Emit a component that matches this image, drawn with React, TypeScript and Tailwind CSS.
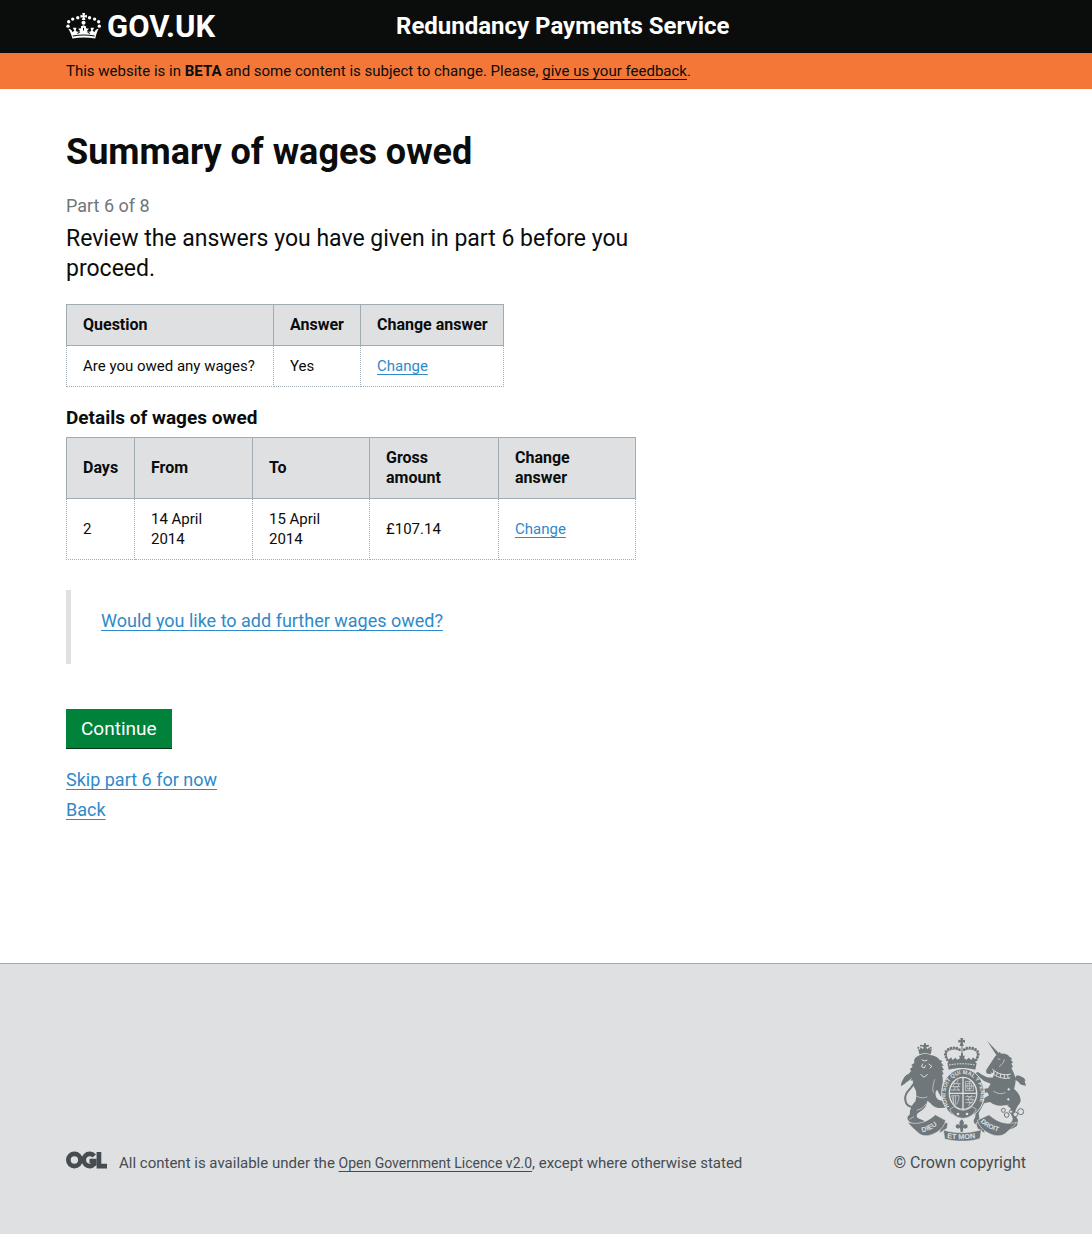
import type { ReactNode } from 'react'

function Crown() {
  return (
    <svg viewBox="30 38 104 80" className="h-[27px] w-[35px] shrink-0" fill="currentColor" aria-hidden="true">
      <path d="M78 38h9l-2 7 7-2v9l-7-2 3 9h-11l3-9-7 2v-9l7 2z" />
      <circle cx="65" cy="52" r="5" />
      <circle cx="100" cy="52" r="5" />
      <circle cx="50" cy="56" r="5" />
      <circle cx="115" cy="56" r="5" />
      <circle cx="38" cy="64" r="5" />
      <circle cx="127" cy="64" r="5" />
      <circle cx="36" cy="77" r="5" />
      <circle cx="129" cy="77" r="5" />
      <circle cx="82" cy="67" r="6" />
      <path d="M37 85c6 0 11 4 12 10l6-5-5-8 11 0-2 8c3 5 8 5 13 1l-6-6 9-2-1-5 8-4 8 4-1 5 9 2-6 6c5 4 10 4 13-1l-2-8h11l-5 8 6 5c1-6 6-10 12-10-5 9-8 19-10 29-23-4-45-4-68 0-2-10-7-20-12-29z" />
      <path d="M50 106c22-4 43-4 65 0M64 99l7-5M101 99l-7-5M82 82v8" fill="none" stroke="#0b0c0c" strokeWidth="3" />
    </svg>
  )
}

function RoyalArms() {
  return (
    <svg viewBox="33 26 375 309" className="h-[103px] w-[125px]" aria-hidden="true">
      <defs>
        <path id="garter" d="M178 232a53 60 0 1 1 84 -2" />
        <path id="scroll-left" d="M97 309q30-7 52-29" />
        <path id="scroll-mid" d="M171 326q45 8 94-2" />
        <path id="scroll-right" d="M271 277q22 25 64 31" />
      </defs>
      {/* lion */}
      <g fill="#6f777b">
        <path d="M84 57l5 4 3-7 7 6 2-6-5-3v-4h6v-5h6v5h6v4l-5 3 2 6 7-6 3 7 5-4-4 18c-11-4-23-4-34 0z" />
        <circle cx="85" cy="55" r="3" />
        <circle cx="93" cy="49" r="3" />
        <circle cx="114" cy="49" r="3" />
        <circle cx="122" cy="55" r="3" />
        <path d="M88 78c10-5 26-5 36 0 10 1 19 6 25 14l9 3-5 4 8 10-6 1 7 12-6 1 5 12-5 1c3 9 3 17 2 25l-3 12 12 10c7 1 11 5 13 12l-1 14-9-6-9 4-10-8-10-18-4 6c-2 14 3 21 12 26 11 1 18 5 25 12l4 13-12-3-16 1c-12 0-22-6-30-16l-8-6c-2 12-6 22-15 28l-14 10c-4 6-4 10 0 14l12 5c8 2 12 6 14 13l-9-2-14 3c-14-1-27-5-32-13-4-7-1-13 5-16 0-16 6-28 17-40 4-12 3-22 2-32l-7-13-3-18-6 1 3-9-8 1 5-11-6-2 8-9-5-4 9-8-4-5 9-6c-2-9 1-14 6-18z" />
      </g>
      <g fill="none" stroke="#dee0e2" strokeWidth="3">
        <path d="M95 91l9 4 8-3M98 103l-3 9 8 4 4-8M116 104l10 7-7 6M92 134l9 10 12-9" />
        <path d="M72 196c14 10 29 12 40 6M80 243c15-4 22-9 28-20M134 150c-5 18-8 28-3 40M58 270l14-8" strokeWidth="2" />
      </g>
      <path d="M68 233c-14-1-20-9-22-20-3-17 6-26 17-38 10-12 16-22 12-30-6-10-17-6-22-1" fill="none" stroke="#6f777b" strokeWidth="6" />
      <path d="M68 135c-10-5-22 1-27 12-4 8-8 12-8 24 6-5 12-6 16-12 10-5 18-12 19-24z" fill="#6f777b" />

      {/* unicorn */}
      <g fill="#6f777b">
        <path d="M291 34l30 46 8-6z" />
        <path d="M316 80l10-6 2-7 6 6c11-1 21 3 25 10l7 4-3 5 6 7-5 4 5 9-5 4 6 12c6 13 9 25 5 39l-3 12c13 10 19 20 18 33-2 12-8 19-13 30-3 12 1 20 7 30l-3 17c-9 8-22 13-39 13-5-9 0-15 12-18 13-5 16-12 13-21-6-10-7-18-5-26l-13-10c-19 4-34 3-49-9l-18 4-16 30 3 24-13 9c-7-7-6-14-1-20l4-24 14-29 24-14-5-9-22 5-17-8-10 4c-6 0-9-5-8-12l12-3 27 4 20-2 8-14-20-8-15-13-12-1-3-8 12-5 12 8 15 8 17 1 7-17c-6 3-10 6-18 6-8-1-11-6-7-14z" />
      </g>
      <g fill="none" stroke="#dee0e2" strokeWidth="3">
        <path d="M307 119c14 14 34 21 55 15M304 130c15 13 35 20 57 16" />
        <path d="M312 123l-2 8M322 129l-2 9M332 133l-1 10M343 136v10M353 136l1 10" />
        <path d="M323 88l8 3M343 90c-1 9-7 15-16 22M310 185c12 8 24 11 37 4M354 226c-4 9-2 17 4 26" strokeWidth="2" />
      </g>
      <path d="M366 236c18-8 27-18 21-32-6-13-19-18-21-34-1-13 7-24 18-25 10-1 17 3 20 10" fill="none" stroke="#6f777b" strokeWidth="6" />
      <path d="M378 140c17-6 26 12 30 29-11-1-19-3-22-11-7-3-12-9-8-18z" fill="#6f777b" />

      {/* garter and quartered shield */}
      <ellipse cx="219" cy="192" rx="64" ry="74" fill="#6f777b" stroke="#dee0e2" strokeWidth="3" />
      <ellipse cx="219" cy="192" rx="41" ry="48" fill="#6f777b" stroke="#dee0e2" strokeWidth="4" />
      <g fill="none" stroke="#dee0e2" strokeWidth="4">
        <path d="M219 144v96M178 192h82" />
        <path d="M186 163h26M183 172h28M182 182h28M190 157l5 6-6 6 7 6-6 8M205 151l-5 9 7 6-6 8 7 10" strokeWidth="2" />
        <path d="M226 156h14q10 0 10 8v20M226 156v28h24M231 162v16h13v-16zM226 170h24M238 156v28" strokeWidth="2" />
        <path d="M185 199h22c0 17-6 26-13 31l-9-31M191 200v22M197 200v25" strokeWidth="2" />
        <path d="M226 202h28M226 211h27M226 220h22M231 198l7 6-5 8 8 6-5 12M246 197l-5 8 8 8-7 10" strokeWidth="2" />
      </g>
      <text fill="#dee0e2" fontSize="17" className="font-['Liberation_Sans'] font-bold">
        <textPath href="#garter">HONI SOIT QUI MAL Y PENSE</textPath>
      </text>
      <path d="M179 240l14-8c16 14 37 14 53 0l13 8c-9 17-23 27-40 27s-31-10-40-27z" fill="#6f777b" stroke="#dee0e2" strokeWidth="2" />
      <g fill="#dee0e2">
        <circle cx="204" cy="254" r="4" />
        <circle cx="231" cy="254" r="4" />
      </g>

      {/* central crown */}
      <g fill="#6f777b">
        <path d="M211 26h9l-2 7 7-2v9l-7-2 3 12h-12l3-12-7 2v-9l7 2zM172 101c28-6 60-6 88 0l-4 20c-27-7-53-7-80 0z" />
        <path d="M175 93l8-9 5 8 8-7 6 6 8-4-3-8h6v-7h6v7h6l-3 8 8 4 6-6 8 7 5-8 8 9-3 9c-26-5-50-5-76 0z" />
      </g>
      <g fill="none" stroke="#6f777b">
        <path d="M178 99c-14-15-16-31-5-38 14-9 31-7 38 3M253 99c14-15 16-31 5-38-14-9-31-7-38 3" strokeWidth="8" strokeDasharray="0 9" strokeLinecap="round" />
        <path d="M179 99c-12-15-13-29-4-35 12-7 26-6 36 0M252 99c12-15 13-29 4-35-12-7-26-6-36 0M216 48v45" strokeWidth="3" />
      </g>
      <path d="M177 107c26-5 52-5 78 0" fill="none" stroke="#dee0e2" strokeWidth="3" strokeDasharray="5 3" />

      {/* fleur-de-lis and motto scroll */}
      <path d="M215 270c9 8 8 14 3 20 6-8 15-7 15 1s-9 8-13 4l-2 13h-6l-2-13c-4 4-13 4-13-4s9-9 15-1c-5-6-6-12 3-20z" fill="#6f777b" />
      <g fill="#6f777b" stroke="#dee0e2" strokeWidth="2">
        <path d="M152 278l22 3-3 16-22 15zM284 276l-26 5 4 16 22 15z" />
        <path d="M53 279c30 8 58 0 83-23l31 17c-4 18-19 36-42 43-20 7-33 3-43-8-10-8-20-17-29-29z" />
        <path d="M380 279c-30 8-58 0-83-23l-35 17c5 18 22 36 44 43 21 7 35 3 45-8 10-8 20-17 29-29z" />
        <path d="M160 302c37 11 75 11 114-1l-4 27c-33 10-72 10-106 1z" />
      </g>
      <g fill="#dee0e2" className="font-['Liberation_Sans'] font-bold">
        <text fontSize="21"><textPath href="#scroll-left">DIEU</textPath></text>
        <text fontSize="22"><textPath href="#scroll-mid">ET MON</textPath></text>
        <text fontSize="20"><textPath href="#scroll-right">DROIT</textPath></text>
      </g>
      <g fill="#dee0e2" stroke="#6f777b" strokeWidth="3">
        <circle cx="355" cy="210" r="5" />
        <circle cx="356" cy="180" r="5" />
        <circle cx="340" cy="243" r="6" />
        <circle cx="350" cy="257" r="7" />
        <circle cx="363" cy="247" r="5" />
        <circle cx="376" cy="255" r="7" />
        <circle cx="392" cy="247" r="9" />
      </g>
    </svg>
  )
}

function OglLogo() {
  return (
    <svg viewBox="30 32 122 52" className="h-[18px] w-[41px] shrink-0" fill="none" stroke="#464c50" strokeWidth="14" role="img" aria-label="Open Government Licence">
      <circle cx="55" cy="58" r="18" />
      <path d="M114 46a18 18 0 1 0 0 24v-9h-14" />
      <path d="M128 34v42h24" />
    </svg>
  )
}

function TextLink({ children, tone = 'text-[#2e8aca]' }: { children: ReactNode; tone?: string }) {
  return (
    <a href="#" className={`underline decoration-1 underline-offset-[3px] [text-decoration-skip-ink:none] ${tone}`}>
      {children}
    </a>
  )
}

function Th({ children, nowrap = false }: { children: ReactNode; nowrap?: boolean }) {
  return (
    <th scope="col" className={`border border-[#a1acb2] bg-[#dee0e2] px-4 py-2.5 text-left text-base leading-5 font-bold ${nowrap ? 'whitespace-nowrap' : ''}`}>
      {children}
    </th>
  )
}

function Td({ children }: { children: ReactNode }) {
  return <td className="border border-dotted border-[#a1acb2] px-4 py-2.5 text-[15px] leading-5">{children}</td>
}

export default function App() {
  return (
    <div className="flex min-h-screen flex-col bg-white font-['Roboto',sans-serif] text-[#0b0c0c]">
      <header className="bg-[#0b0c0c] px-4 text-white">
        <div className="mx-auto flex max-w-[960px] flex-wrap items-center py-2.5">
          <a href="#" className="flex w-[330px] items-center gap-1.5 text-[31px] leading-[33px] font-bold">
            <Crown />
            GOV.UK
          </a>
          <a href="#" className="text-2xl leading-[33px] font-bold">Redundancy Payments Service</a>
        </div>
      </header>
      <div className="bg-[#f47738] px-4">
        <p className="mx-auto max-w-[960px] py-2 text-[15px] leading-5">
          This website is in <strong className="font-bold">BETA</strong> and some content is subject to change. Please,{' '}
          <TextLink tone="text-[#0b0c0c]">give us your feedback</TextLink>.
        </p>
      </div>

      <main className="grow px-4 pt-10 pb-[138px]">
        <div className="mx-auto max-w-[960px]">
          <div className="max-w-[570px]">
            <h1 className="text-4xl leading-[46px] font-bold">Summary of wages owed</h1>
            <p className="mt-[18px] text-[18px] leading-[25px] text-[#6f777b]">Part 6 of 8</p>
            <p className="mt-[6px] text-[23px] leading-[30px]">Review the answers you have given in part 6 before you proceed.</p>
          </div>

          <table className="mt-5 w-[438px] table-fixed border-collapse">
            <colgroup>
              <col className="w-[207px]" />
              <col className="w-[87px]" />
              <col />
            </colgroup>
            <thead>
              <tr>
                <Th>Question</Th>
                <Th>Answer</Th>
                <Th nowrap>Change answer</Th>
              </tr>
            </thead>
            <tbody>
              <tr>
                <Td>Are you owed any wages?</Td>
                <Td>Yes</Td>
                <Td><TextLink>Change</TextLink></Td>
              </tr>
            </tbody>
          </table>

          <h2 className="mt-[18px] mb-[7px] text-[19px] leading-[25px] font-bold">Details of wages owed</h2>
          <table className="w-[570px] table-fixed border-collapse">
            <colgroup>
              <col className="w-[68px]" />
              <col className="w-[118px]" />
              <col className="w-[117px]" />
              <col className="w-[129px]" />
              <col />
            </colgroup>
            <thead>
              <tr>
                <Th>Days</Th>
                <Th>From</Th>
                <Th>To</Th>
                <Th>Gross amount</Th>
                <Th>Change answer</Th>
              </tr>
            </thead>
            <tbody>
              <tr>
                <Td>2</Td>
                <Td>14 April 2014</Td>
                <Td>15 April 2014</Td>
                <Td>£107.14</Td>
                <Td><TextLink>Change</TextLink></Td>
              </tr>
            </tbody>
          </table>

          <div className="mt-[30px] border-l-[5px] border-[#dee0e2] pt-[18px] pb-[31px] pl-[30px] text-[18px] leading-[25px]">
            <TextLink>Would you like to add further wages owed?</TextLink>
          </div>

          <button type="button" className="mt-[45px] block bg-[#00823b] px-[15px] py-[7px] text-[19px] leading-[25px] text-white shadow-[0_1px_0_#003618]">
            Continue
          </button>
          <div className="mt-[17px] flex flex-col items-start text-[18px] leading-[30px]">
            <TextLink>Skip part 6 for now</TextLink>
            <TextLink>Back</TextLink>
          </div>
        </div>
      </main>

      <footer className="border-t border-[#a1acb2] bg-[#dee0e2] px-4 pt-[74px] pb-[61px] text-[#464c50]">
        <div className="mx-auto flex max-w-[960px] flex-wrap items-end justify-between gap-y-8">
          <div className="flex items-start gap-3">
            <OglLogo />
            <p className="pt-0.5 text-[15px] leading-5">
              All content is available under the{' '}
              <span className="text-sm leading-5"><TextLink tone="text-[#464c50]">Open Government Licence v2.0</TextLink></span>, except where otherwise stated
            </p>
          </div>
          <div className="flex flex-col items-end gap-3">
            <RoyalArms />
            <a href="#" className="text-base leading-5">© Crown copyright</a>
          </div>
        </div>
      </footer>
    </div>
  )
}
